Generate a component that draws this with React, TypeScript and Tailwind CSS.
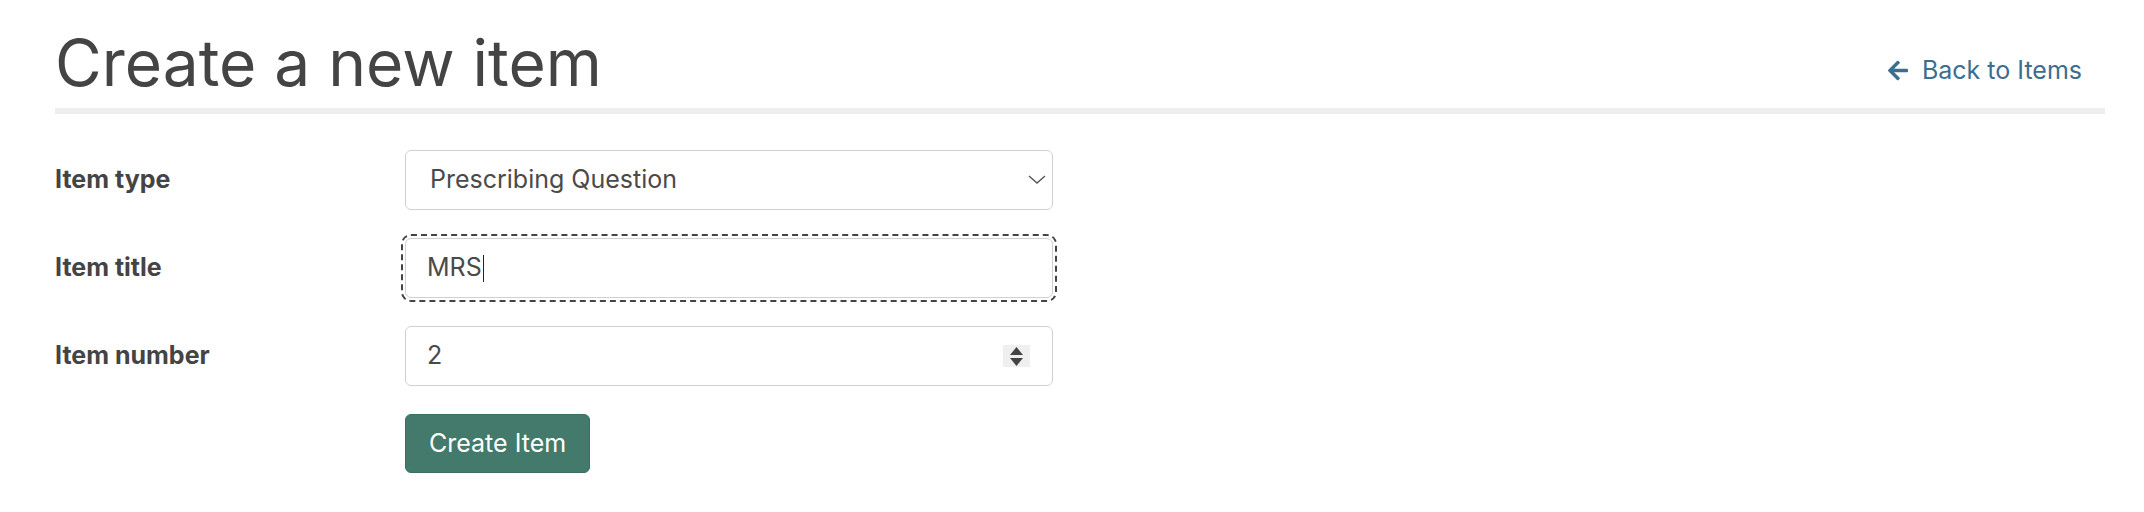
import { useState } from 'react';

const labelCls = 'w-[350px] shrink-0 text-[25px] font-bold text-[#444444]';
const fieldCls =
  'w-[648px] h-[60px] rounded-[6px] border border-[#d0d0d0] bg-white text-[25px] text-[#4a4a4a]';

function ArrowLeft() {
  return (
    <svg viewBox="0 0 448 512" className="h-[23px] w-[20px] fill-current">
      <path d="M257.5 445.1l-22.2 22.2c-9.4 9.4-24.6 9.4-33.9 0L7 273c-9.4-9.4-9.4-24.6 0-33.9L201.4 44.7c9.4-9.4 24.6-9.4 33.9 0l22.2 22.2c9.5 9.5 9.3 25-.4 34.3L136.6 216H424c13.3 0 24 10.7 24 24v32c0 13.3-10.7 24-24 24H136.6l120.5 114.8c9.8 9.3 10 24.8.4 34.3z" />
    </svg>
  );
}

function Row({ label, children }: { label: string; children: React.ReactNode }) {
  return (
    <div className="flex items-center">
      <label className={labelCls}>{label}</label>
      {children}
    </div>
  );
}

export default function App() {
  const [itemType, setItemType] = useState('prescribing');

  return (
    <div className="min-h-[512px] bg-white pt-[31px] pr-[39px] pl-[55px] font-['Inter',sans-serif] text-[#444444]">
      <div className="flex items-start justify-between border-b-[6px] border-[#eeeeee] pb-[13px]">
        <h1 className="text-[64px] leading-none font-normal text-[#444444]">Create a new item</h1>
        <a href="#" className="mt-[27px] mr-[23px] flex items-center gap-[14px] text-[25px] leading-none text-[#3b6e8f]">
          <ArrowLeft />
          Back to Items
        </a>
      </div>

      <form className="mt-[36px] flex flex-col gap-[28px]" onSubmit={(e) => e.preventDefault()}>
        <Row label="Item type">
          <div className="relative">
            <select
              value={itemType}
              onChange={(e) => setItemType(e.target.value)}
              className={`${fieldCls} appearance-none pl-[24px] outline-none`}
            >
              <option value="prescribing">Prescribing Question</option>
              <option value="sba">Single Best Answer</option>
            </select>
            <svg
              viewBox="0 0 18 9"
              className="pointer-events-none absolute top-[25px] right-[7px] h-[9px] w-[18px] stroke-[#555555]"
              fill="none"
              strokeWidth="1.4"
            >
              <path d="M1 1l8 7 8-7" />
            </svg>
          </div>
        </Row>

        <Row label="Item title">
          <div
            className={`${fieldCls} flex items-center px-[21px] outline-2 outline-offset-[2px] outline-dashed outline-[#444444]`}
          >
            <span>MRS</span>
            <span className="ml-px h-[27px] w-px bg-[#222222]" />
          </div>
        </Row>

        <Row label="Item number">
          <div className={`${fieldCls} flex items-center justify-between pl-[21px] pr-[22px]`}>
            <span>2</span>
            <div className="flex h-[22px] w-[27px] flex-col items-center justify-center gap-[3px] bg-[#efefef]">
              <svg viewBox="0 0 13 8" className="h-[8px] w-[13px] fill-[#444444]">
                <path d="M6.5 0l6.5 8H0z" />
              </svg>
              <svg viewBox="0 0 13 8" className="h-[8px] w-[13px] fill-[#444444]">
                <path d="M0 0h13L6.5 8z" />
              </svg>
            </div>
          </div>
        </Row>

        <div className="flex">
          <div className="w-[350px] shrink-0" />
          <button
            type="submit"
            className="h-[59px] rounded-[6px] border border-[#3a6e61] bg-[#437a6c] px-[23px] text-[25px] text-white"
          >
            Create Item
          </button>
        </div>
      </form>
    </div>
  );
}
